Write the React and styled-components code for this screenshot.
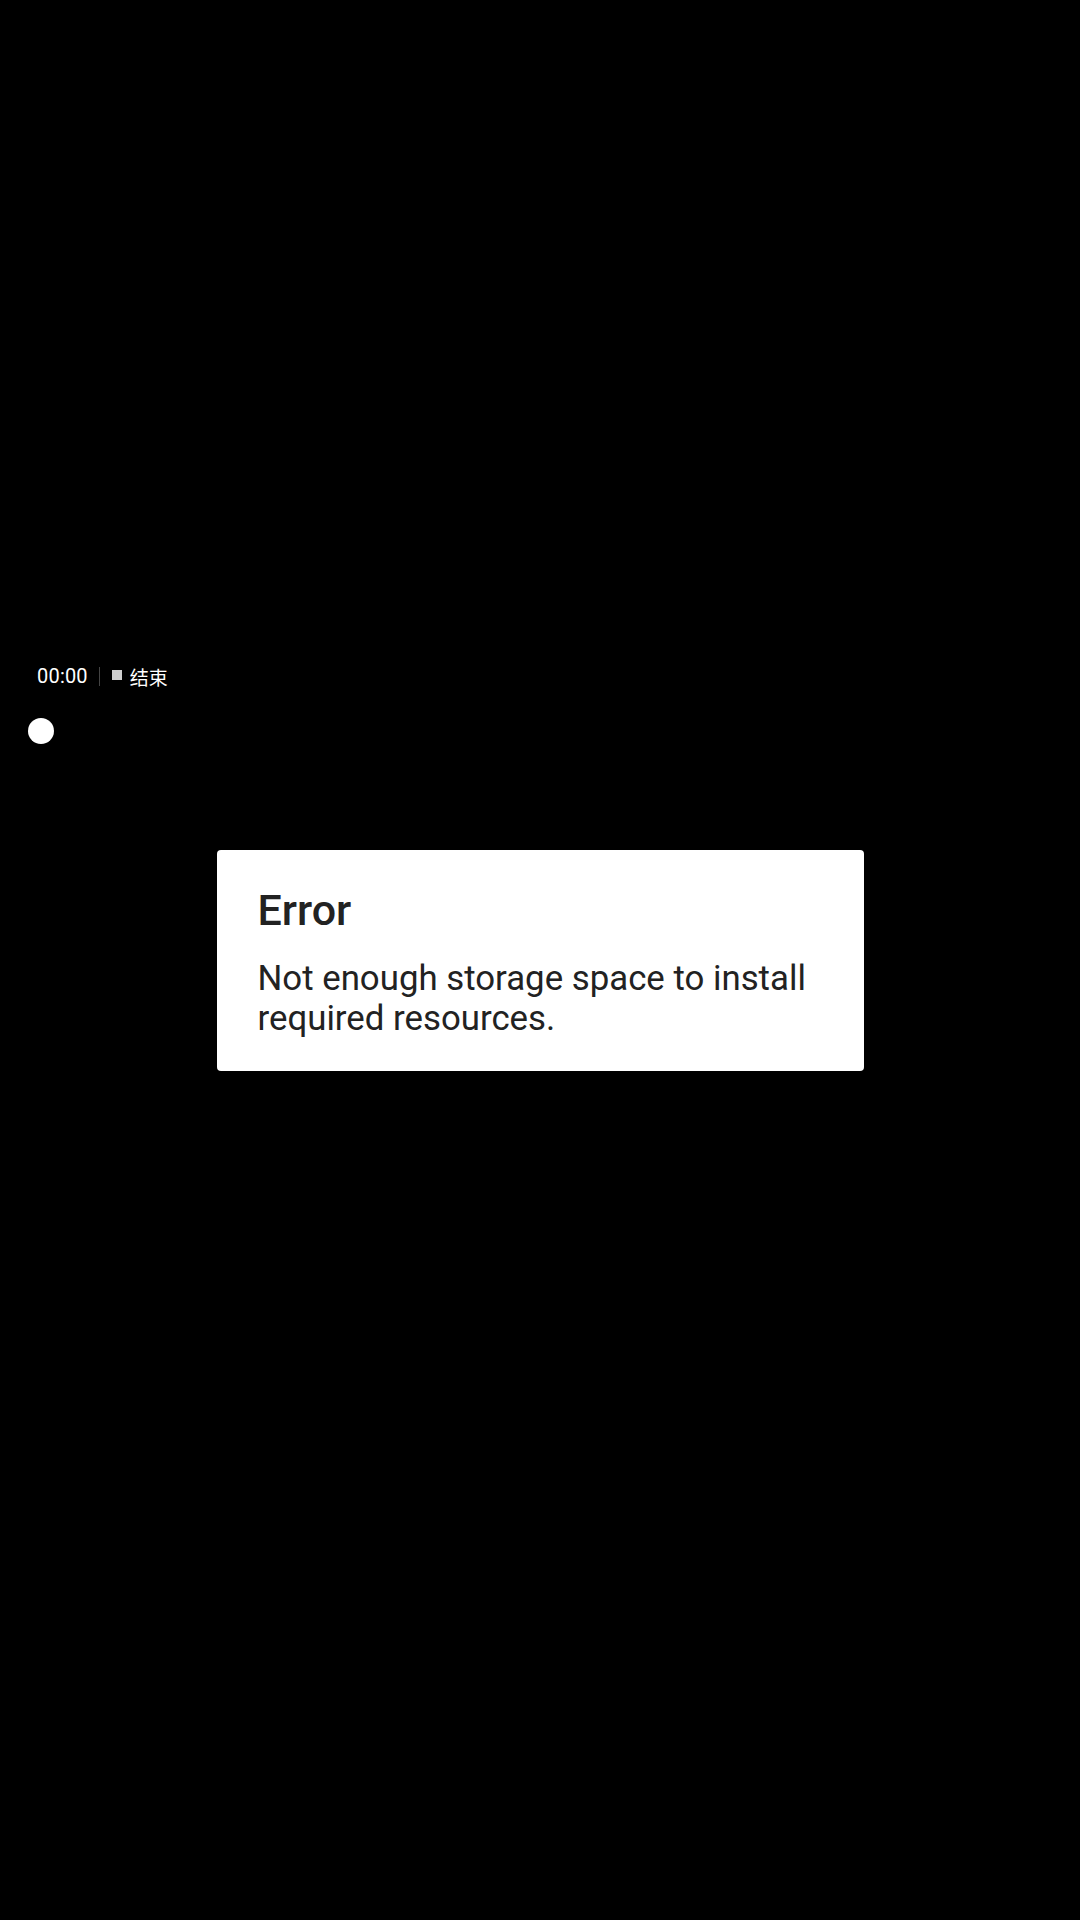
import React from 'react';
import styled, { createGlobalStyle } from 'styled-components';

const Global = createGlobalStyle`
    html, body {
        margin: 0;
        padding: 0;
        background: #000;
    }
    body {
        font-family: Roboto, "Noto Sans", "Noto Sans CJK SC", sans-serif;
    }
`;

const Screen = styled.div`
    position: relative;
    width: 1080px;
    height: 1920px;
    background: #000;
    display: flex;
    justify-content: center;
    align-items: center;
    overflow: hidden;
`;

const Recorder = styled.div`
    position: absolute;
    left: 27px;
    top: 662px;
    display: flex;
    flex-direction: column;
    align-items: flex-start;
    gap: 28px;
`;

const RecBar = styled.div`
    display: flex;
    align-items: center;
    height: 28px;
    padding-left: 10px;
    color: #fff;
`;

const Timer = styled.span`
    font-family: Roboto, sans-serif;
    font-size: 20px;
    letter-spacing: 0.2px;
`;

const Divider = styled.span`
    width: 1px;
    height: 19px;
    background: #444;
    margin: 0 12px 0 11px;
`;

const StopSquare = styled.span`
    width: 10px;
    height: 10px;
    background: #cfcfcf;
    margin-right: 8px;
    margin-top: -2px;
`;

const StopLabel = styled.span`
    font-family: "Noto Sans CJK SC", sans-serif;
    font-size: 19px;
`;

const RecDot = styled.span`
    width: 26px;
    height: 26px;
    border-radius: 50%;
    background: #fff;
    margin-left: 1px;
`;

const Dialog = styled.div`
    width: 647px;
    box-sizing: border-box;
    background: #fff;
    border-radius: 4px;
    padding: 32px 40px 33px 41px;
    color: #222;
`;

const Title = styled.h2`
    margin: 0 0 20px;
    font-family: Roboto, sans-serif;
    font-weight: 500;
    font-size: 43px;
    line-height: 56px;
`;

const Message = styled.p`
    margin: 0;
    font-family: Roboto, sans-serif;
    font-weight: 400;
    font-size: 34.8px;
    line-height: 40px;
`;

export default function App() {
    return (
        <>
            <Global />
            <Screen>
                <Recorder>
                    <RecBar>
                        <Timer>00:00</Timer>
                        <Divider />
                        <StopSquare />
                        <StopLabel>结束</StopLabel>
                    </RecBar>
                    <RecDot />
                </Recorder>
                <Dialog>
                    <Title>Error</Title>
                    <Message>Not enough storage space to install required resources.</Message>
                </Dialog>
            </Screen>
        </>
    );
}
